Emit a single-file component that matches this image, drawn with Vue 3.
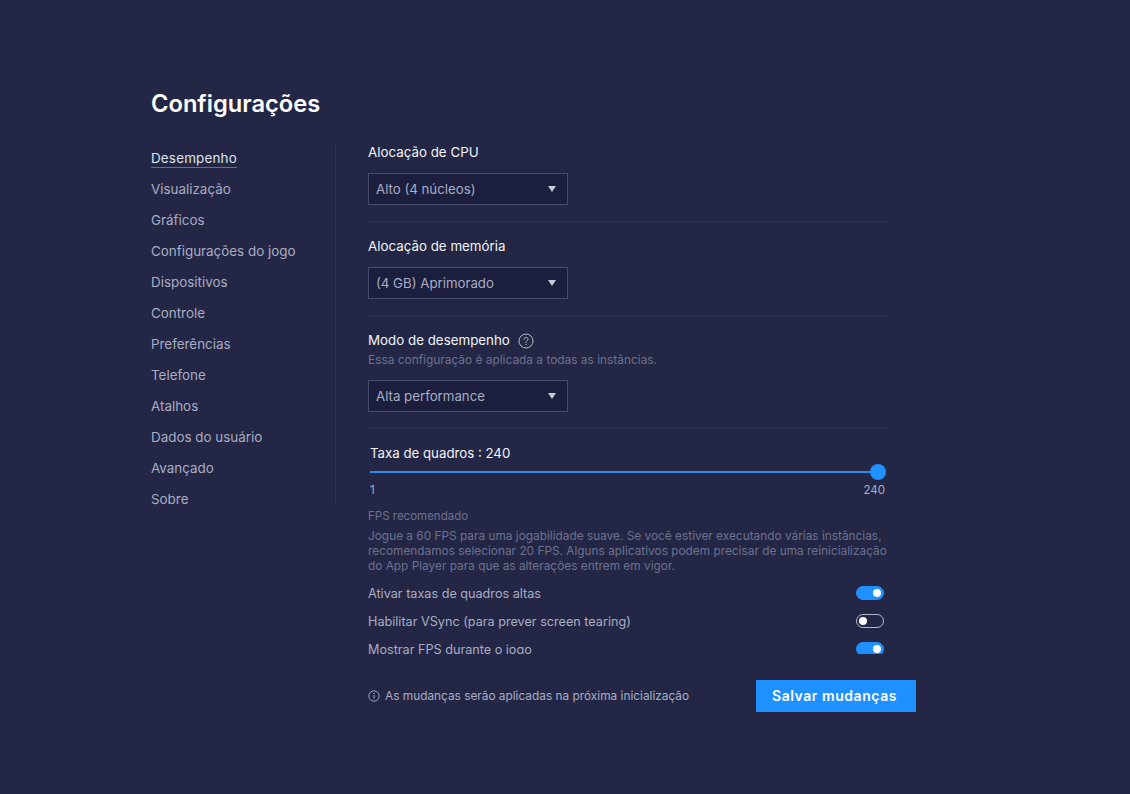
<script setup>
const nav = ['Desempenho','Visualização','Gráficos','Configurações do jogo','Dispositivos','Controle','Preferências','Telefone','Atalhos','Dados do usuário','Avançado','Sobre']
const toggles = [
  { label: 'Ativar taxas de quadros altas', on: true },
  { label: 'Habilitar VSync (para prever screen tearing)', on: false },
  { label: 'Mostrar FPS durante o jogo', on: true },
]
</script>

<template>
  <div class="page">
    <h1 class="title">Configurações</h1>
    <div class="body">
      <nav class="nav">
        <a v-for="(n, i) in nav" :key="n" class="nav-item" :class="{ active: i === 0 }"><span>{{ n }}</span></a>
      </nav>
      <div class="panel">
        <div class="scroll">
          <section class="group">
            <div class="label">Alocação de CPU</div>
            <div class="select"><span>Alto (4 núcleos)</span><i class="caret"></i></div>
          </section>
          <section class="group">
            <div class="label">Alocação de memória</div>
            <div class="select"><span>(4 GB) Aprimorado</span><i class="caret"></i></div>
          </section>
          <section class="group">
            <div class="label with-help">Modo de desempenho
              <svg class="help" width="16" height="16" viewBox="0 0 16 16" fill="none">
                <circle cx="8" cy="8" r="7" stroke="#b9bccf" stroke-width="1"/>
                <path d="M6 6.3c0-1.2.9-1.9 2-1.9s2 .7 2 1.8c0 1.5-2 1.6-2 3.2" stroke="#b9bccf" stroke-width="1" stroke-linecap="round"/>
                <circle cx="8" cy="11.4" r=".7" fill="#b9bccf"/>
              </svg>
            </div>
            <div class="desc">Essa configuração é aplicada a todas as instâncias.</div>
            <div class="select"><span>Alta performance</span><i class="caret"></i></div>
          </section>
          <section class="rate">
            <div class="rate-label">Taxa de quadros : 240</div>
            <div class="track"><i class="thumb"></i></div>
            <div class="ends"><span>1</span><span>240</span></div>
            <div class="fps-title">FPS recomendado</div>
            <p class="fps-text">Jogue a 60 FPS para uma jogabilidade suave. Se você estiver executando várias instâncias,<br>recomendamos selecionar 20 FPS. Alguns aplicativos podem precisar de uma reinicialização<br>do App Player para que as alterações entrem em vigor.</p>
          </section>
          <div v-for="t in toggles" :key="t.label" class="toggle-row">
            <span>{{ t.label }}</span>
            <i class="toggle" :class="{ on: t.on }"></i>
          </div>
        </div>
        <div class="footer">
          <div class="note">
            <svg width="12" height="12" viewBox="0 0 12 12" fill="none">
              <circle cx="6" cy="6" r="5.2" stroke="#a9adc4" stroke-width=".9"/>
              <path d="M6 5.2v3.4" stroke="#a9adc4" stroke-width="1"/>
              <circle cx="6" cy="3.5" r=".65" fill="#a9adc4"/>
            </svg>
            <span>As mudanças serão aplicadas na próxima inicialização</span>
          </div>
          <button class="save">Salvar mudanças</button>
        </div>
      </div>
    </div>
  </div>
</template>

<style>
html, body { margin: 0; background: #232745; }
</style>

<style scoped>
.page {
  width: 1130px;
  height: 794px;
  box-sizing: border-box;
  padding: 88px 0 0 151px;
  background: #232745;
  font-family: Inter, "Noto Sans", sans-serif;
  overflow: hidden;
  color: #b4b7cc;
}
.title {
  margin: 0 0 24px;
  font-size: 23.7px;
  line-height: 32px;
  font-weight: 600;
  color: #fff;
}
.body { display: flex; align-items: flex-start; }
.nav {
  width: 184px;
  height: 356px;
  border-right: 1px solid #2f3353;
  padding-top: 4px;
  display: flex;
  flex-direction: column;
  gap: 11px;
}
.nav-item { font-size: 13.4px; line-height: 20px; height: 20px; color: #a9adc4; }
.nav-item span { display: inline-block; }
.nav-item.active { color: #dfe1ee; letter-spacing: .2px; }
.nav-item.active span { box-sizing: border-box; height: 20px; border-bottom: 1px solid #2380e0; }
.panel { margin-left: 32px; width: 548px; }
.scroll { height: 510px; overflow: hidden; width: 520px; }
.group { border-bottom: 1px solid #2b2f4f; padding-bottom: 16px; margin-bottom: 16px; }
.label { font-size: 13.35px; line-height: 17px; color: #f2f3f8; margin-bottom: 12px; }
.with-help { display: flex; align-items: center; gap: 8px; margin-bottom: 3px; }
.help { flex: none; }
.desc { font-size: 11.9px; line-height: 16px; color: #6d7190; margin-bottom: 12px; }
.select {
  width: 200px;
  height: 32px;
  box-sizing: border-box;
  border: 1px solid #464a6b;
  background: #1b1e3c;
  padding: 0 11px 0 7px;
  display: flex;
  align-items: center;
  justify-content: space-between;
  font-size: 13.25px;
  color: #a9adc4;
}
.caret {
  width: 0;
  height: 0;
  border-left: 4.5px solid transparent;
  border-right: 4.5px solid transparent;
  border-top: 6px solid #c6c9da;
}
.rate { margin-top: -1px; }
.rate-label { margin-left: 2px; font-size: 13.25px; line-height: 18px; color: #f2f3f8; }
.track {
  position: relative;
  margin: 9px 2px 0;
  width: 508px;
  height: 2px;
  background: #2a8be8;
}
.thumb {
  position: absolute;
  right: -8px;
  top: -7px;
  width: 16px;
  height: 16px;
  border-radius: 50%;
  background: #1e90ff;
}
.ends {
  display: flex;
  justify-content: space-between;
  margin: 9px 3px 0 2px;
  width: 515px;
  font-size: 11.5px;
  line-height: 16px;
  color: #a9adc4;
}
.fps-title { margin-top: 10px; font-size: 11.5px; line-height: 16px; color: #6d7190; }
.fps-text { margin: 5px 0 5px; font-size: 11.85px; line-height: 15px; color: #6d7190; white-space: nowrap; }
.toggle-row {
  height: 28px;
  display: flex;
  align-items: center;
  justify-content: space-between;
  padding-right: 4px;
  font-size: 12.65px;
  color: #a9adc4;
}
.toggle {
  position: relative;
  width: 28px;
  height: 14px;
  box-sizing: border-box;
  border-radius: 7px;
  border: 1px solid #b4b7cc;
}
.toggle::after {
  content: "";
  position: absolute;
  left: 2px;
  top: 2px;
  width: 8px;
  height: 8px;
  border-radius: 50%;
  background: #fff;
}
.toggle.on { background: #1e90ff; border-color: #1e90ff; }
.toggle.on::after { left: auto; right: 2px; }
.footer {
  display: flex;
  align-items: center;
  justify-content: space-between;
  margin-top: 26px;
}
.note { display: flex; align-items: center; gap: 5px; font-size: 11.85px; color: #a9adc4; }
.save {
  width: 160px;
  height: 32px;
  border: 0;
  padding: 0 3px 2px 0;
  background: #1e90ff;
  color: #fff;
  font-family: inherit;
  font-size: 14px;
  font-weight: 600;
  letter-spacing: .55px;
}
</style>
